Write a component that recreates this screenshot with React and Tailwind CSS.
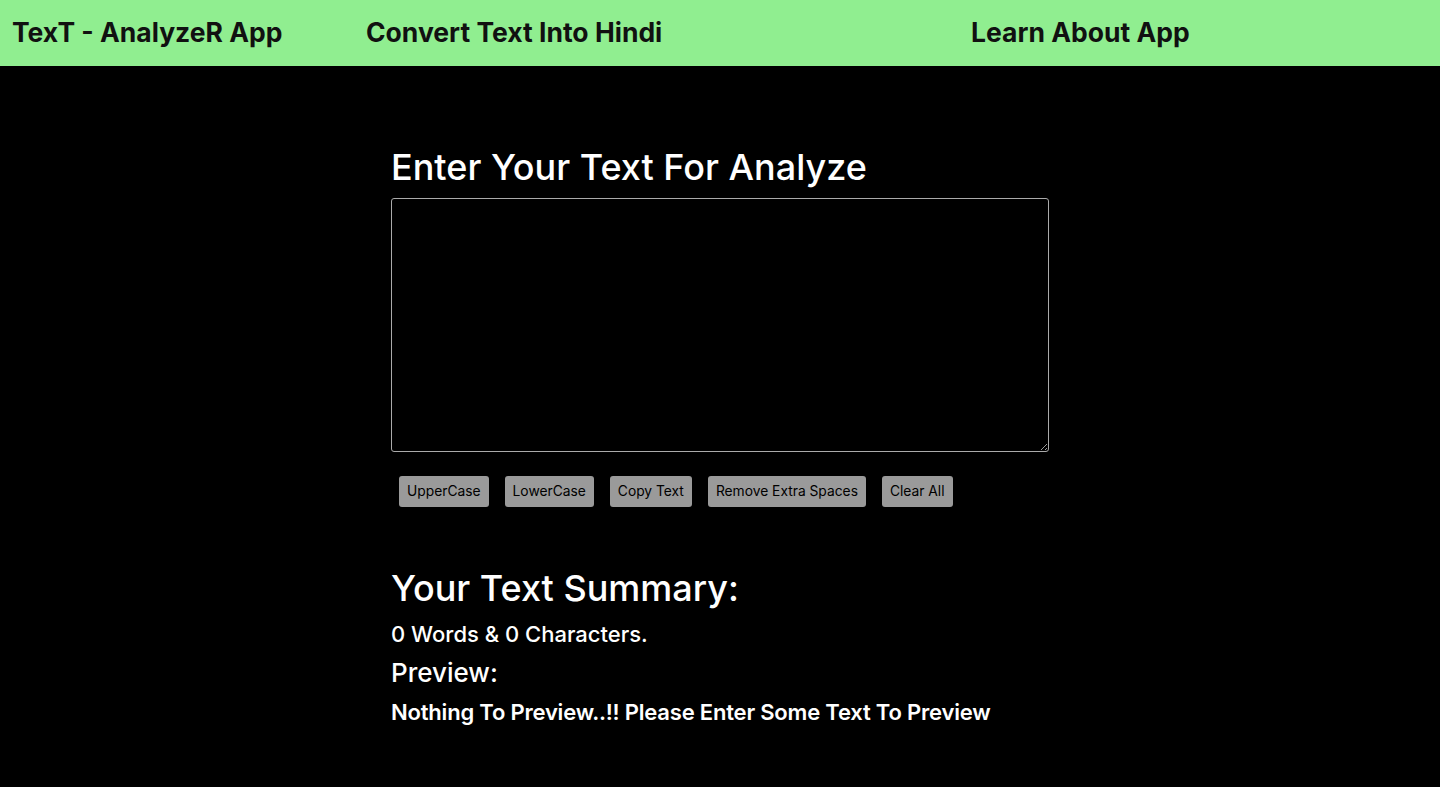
import React, { useState } from "react";

const Navbar = () => {
    return (
        <nav className="w-full h-[66px] bg-[#90ee90] flex items-center text-[#111] font-bold text-[26.5px]">
            <span className="ml-[12px] w-[354px]">TexT - AnalyzeR App</span>
            <span className="w-[605px]">Convert Text Into Hindi</span>
            <span>Learn About App</span>
        </nav>
    );
};

const App = () => {
    const [text, setText] = useState("");
    const words = text.split(/\s+/).filter((w) => w.length > 0).length;

    return (
        <div className="min-h-[787px] bg-black text-white font-['Inter',sans-serif]">
            <Navbar />
            <div className="w-[658px] mx-auto pt-[74px]">
                <h1 className="text-[36px] font-medium leading-[54px] mb-[4px]">Enter Your Text For Analyze</h1>
                <textarea
                    className="block w-full h-[254px] bg-black text-white border border-[#aaa] rounded-[3px] outline-none"
                    value={text}
                    onChange={(e) => setText(e.target.value)}
                ></textarea>
                <div className="flex mt-[24px] text-[13.8px] text-black">
                    <button className="mx-2 px-[8px] h-[31px] bg-[#9a9a9a] rounded-[3px]" onClick={() => setText(text.toUpperCase())}>UpperCase</button>
                    <button className="mx-2 px-[8px] h-[31px] bg-[#9a9a9a] rounded-[3px]" onClick={() => setText(text.toLowerCase())}>LowerCase</button>
                    <button className="mx-2 px-[8px] h-[31px] bg-[#9a9a9a] rounded-[3px]">Copy Text</button>
                    <button className="mx-2 px-[8px] h-[31px] bg-[#9a9a9a] rounded-[3px]" onClick={() => setText(text.split(/[ ]+/).join(" "))}>Remove Extra Spaces</button>
                    <button className="mx-2 px-[8px] h-[31px] bg-[#9a9a9a] rounded-[3px]" onClick={() => setText("")}>Clear All</button>
                </div>
                <h2 className="mt-[56px] text-[36px] font-medium leading-[50px]">Your Text Summary:</h2>
                <p className="text-[22px] font-medium leading-[42px]">{words} Words &amp; {text.length} Characters.</p>
                <h3 className="text-[26px] font-medium leading-[36px]">Preview:</h3>
                <p className="text-[22px] font-semibold leading-[42px] tracking-[-0.2px]">{text.length > 0 ? text : "Nothing To Preview..!! Please Enter Some Text To Preview"}</p>
            </div>
        </div>
    );
};

export default App;
